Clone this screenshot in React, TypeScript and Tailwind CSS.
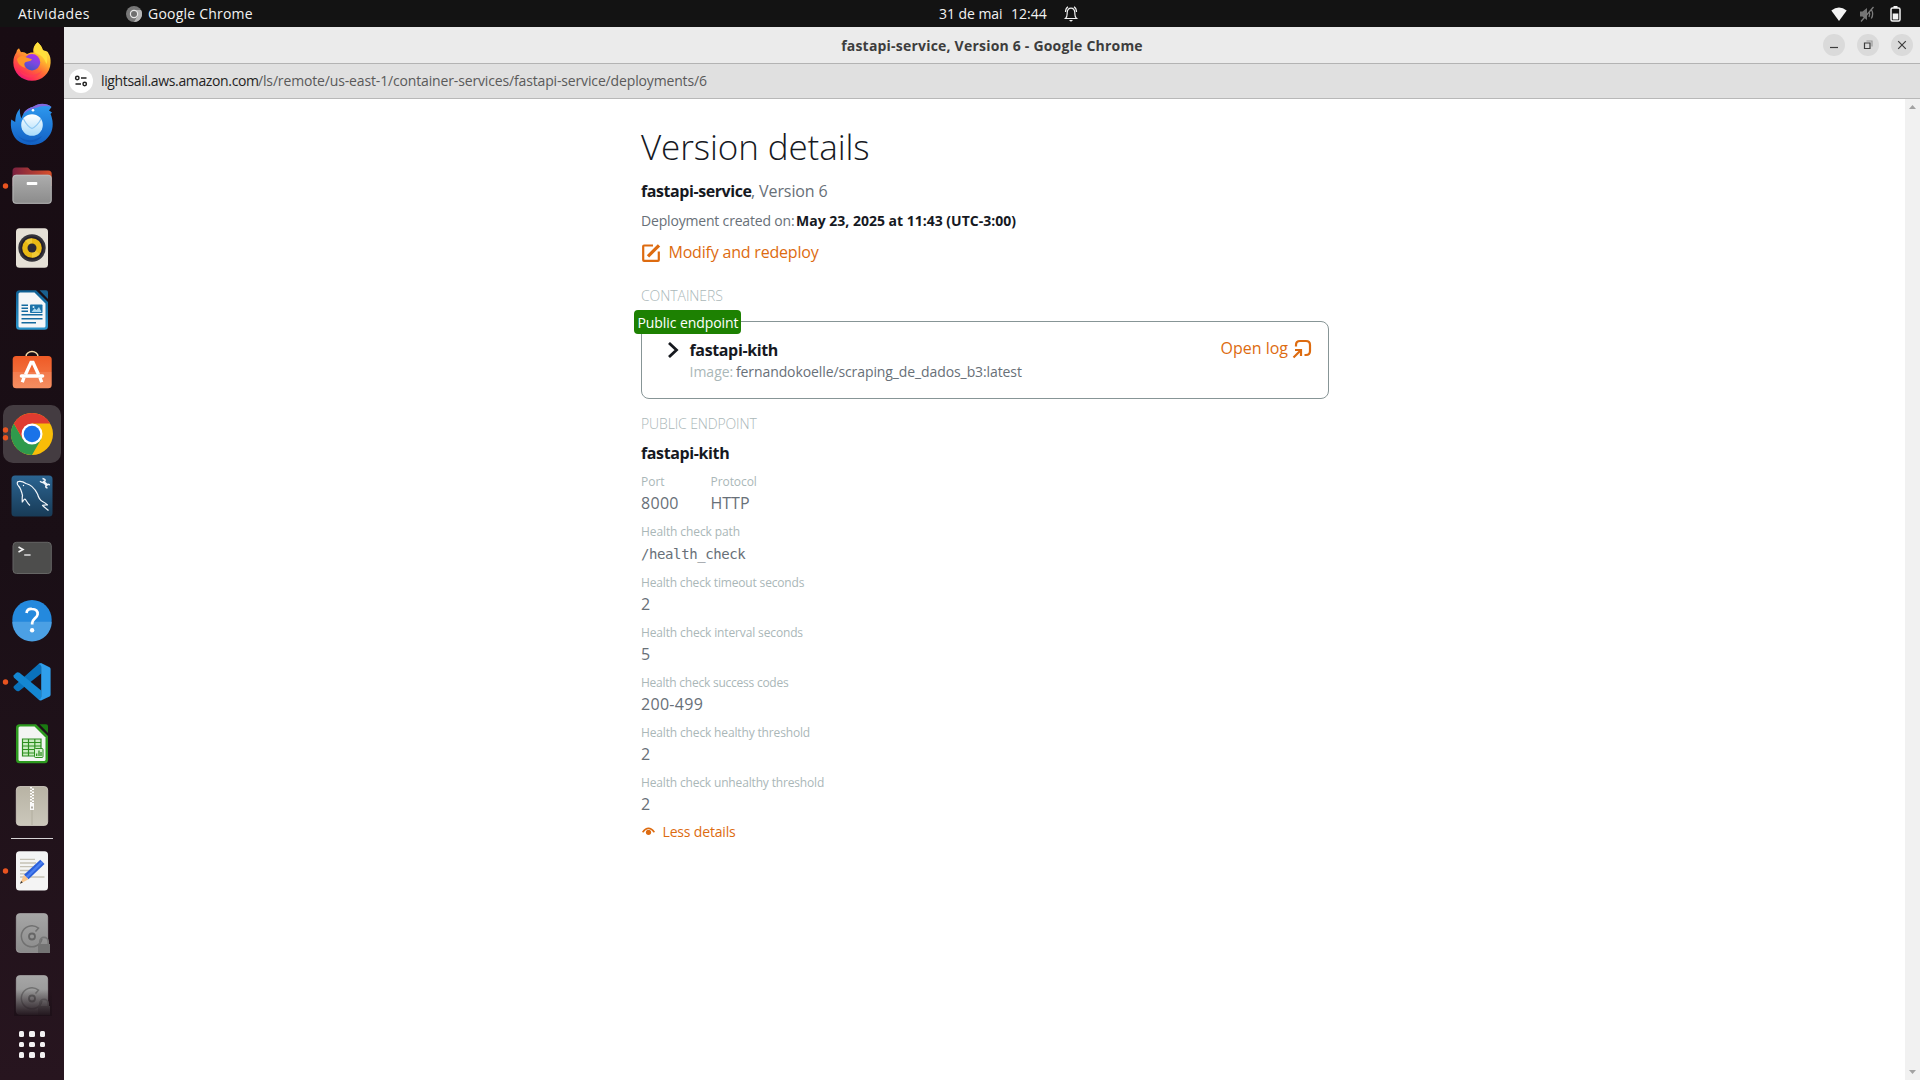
import type { ReactNode } from 'react';

function DockItem({ dots = 0, active = false, children }: { dots?: number; active?: boolean; children: ReactNode }) {
  return (
    <svg className="h-[62px] w-16 shrink-0" viewBox="0 0 64 62">
      {active && <rect x="3" y="2" width="58" height="58" rx="10" fill="#443c41" />}
      {dots === 1 && <circle cx="5.5" cy="31" r="2.7" fill="#e95420" />}
      {dots === 2 && (
        <>
          <circle cx="5.5" cy="27" r="2.7" fill="#e95420" />
          <circle cx="5.5" cy="34.8" r="2.7" fill="#e95420" />
        </>
      )}
      {children}
    </svg>
  );
}

function Gradient({ id, from, to, horizontal = false }: { id: string; from: string; to: string; horizontal?: boolean }) {
  return (
    <linearGradient id={id} x1="0" y1="0" x2={horizontal ? 1 : 0} y2={horizontal ? 0 : 1}>
      <stop offset="0" stopColor={from} />
      <stop offset="1" stopColor={to} />
    </linearGradient>
  );
}

function Firefox() {
  return (
    <DockItem>
      <defs>
        <linearGradient id="ffBody" x1="0.85" y1="0.05" x2="0.25" y2="1">
          <stop offset="0" stopColor="#fff44f" />
          <stop offset="0.35" stopColor="#ffb52e" />
          <stop offset="0.6" stopColor="#ff6a36" />
          <stop offset="0.85" stopColor="#ff2f55" />
          <stop offset="1" stopColor="#e31587" />
        </linearGradient>
        <linearGradient id="ffGlobe" x1="0.7" y1="0" x2="0.3" y2="1">
          <stop offset="0" stopColor="#b22fe8" />
          <stop offset="0.5" stopColor="#7a49e0" />
          <stop offset="1" stopColor="#4453c4" />
        </linearGradient>
      </defs>
      <path d="M37.7 11.3C40.5 14 42 16.2 42.8 19C46 20.5 47.5 19.5 48.5 22.5C50.3 25 50.8 28 50.6 32C50 42.5 42 49.8 32 49.8C21.5 49.8 13.3 41.6 13.3 31.5C13.3 27 14.6 23.8 16.3 21.5L17 19L19 17.2L21 21.2C23.5 20.8 25.3 21.6 27 23.1C29 21.5 31.5 21.2 33.5 21.5C32.5 17.5 34.5 13.8 37.7 11.3Z" fill="url(#ffBody)" />
      <circle cx="32" cy="31.3" r="8.2" fill="url(#ffGlobe)" />
      <path d="M17 28C20 24 23 24.5 26.5 26.5L32 28.3C31 31 27 30 25 31.5C23.5 33 24.5 35.5 25.5 37C20 35.5 17.5 32 17 28Z" fill="#ff9428" />
      <path d="M37.7 11.3C40.5 14 42 16.2 42.8 19C47 22 48.5 28 46.5 33C45 29 42 24 38.5 23.5L35 21.8C33 18 34.5 13.8 37.7 11.3Z" fill="#ffdf3c" />
      <path d="M19 38C24 45.5 36 46 42 39.5C37 49 23 49 19 38Z" fill="#ff3b5c" opacity=".6" />
    </DockItem>
  );
}

function Thunderbird() {
  return (
    <DockItem>
      <defs>
        <Gradient id="tbBody" from="#2f9bf0" to="#1260c4" />
        <Gradient id="tbMail" from="#ffffff" to="#a9dcfb" />
      </defs>
      <path d="M51.5 14C48 10.5 40 9.5 34 13.5C27 15 23 20 21.5 25.5C20 22 19.5 18.5 20 15.5C16 20 15.5 24 15.2 29L11.2 26.5C10 34 12 42 17 47C25 54 38 53.5 45.500 47C51 42 53.5 36 52.5 28C52 25 51.5 23 50.5 21L52 19.5L49 17.5Z" fill="url(#tbBody)" />
      <path d="M51.5 14C46 9.5 38.5 9.8 33 13.7C29 14.500 25 17 23 21C30 15.500 35 15.5 40 13.5C44 12.6 48 12.6 51.5 14Z" fill="#8468dd" />
      <circle cx="33" cy="17.300" r="1.300" fill="#fff" />
      <circle cx="32" cy="32" r="10.800" fill="url(#tbMail)" />
      <path d="M23.500 26C26 31 29.500 34.500 32 35.500C34.500 34.500 39 30.500 41 26" fill="none" stroke="#8fc8f2" strokeWidth="1.200" />
      <path d="M15 38C19 48 32 50 42 43C37 51 22 53 15 38Z" fill="#0d4fae" opacity=".5" />
    </DockItem>
  );
}

function Files() {
  return (
    <DockItem dots={1}>
      <defs>
        <Gradient id="fTab" from="#7a2140" to="#d9502a" horizontal />
        <Gradient id="fBody" from="#adadad" to="#8b8b8b" />
      </defs>
      <path d="M12.5 16a3.5 3.5 0 0 1 3.5-3.5h11.5c1.5 0 2 3 4.5 3h16.2a3.5 3.5 0 0 1 3.5 3.5v12h-39.2z" fill="url(#fTab)" />
      <rect x="12.5" y="19.8" width="39.2" height="29" rx="3.5" fill="url(#fBody)" />
      <rect x="13" y="20.3" width="38.2" height="28" rx="3" fill="none" stroke="#bcbcbc" strokeWidth=".8" />
      <rect x="26.7" y="27" width="10.6" height="3" rx=".8" fill="#fff" />
    </DockItem>
  );
}

function Rhythmbox() {
  return (
    <DockItem>
      <rect x="16" y="11.3" width="32" height="39.5" rx="3.5" fill="#e5e0d6" />
      <circle cx="32" cy="31" r="13.7" fill="#35343a" />
      <circle cx="32" cy="31" r="11.5" fill="#241f2b" />
      <circle cx="32" cy="31" r="9.8" fill="#e9b914" />
      <path d="M32 31L25 23.5A10 10 0 0 1 32 21.2ZM32 31L40 37A10 10 0 0 1 32 40.8Z" fill="#f7d64a" opacity=".6" />
      <circle cx="32" cy="31" r="4.5" fill="#2a2834" />
    </DockItem>
  );
}

function Writer() {
  return (
    <DockItem>
      <defs><Gradient id="wrB" from="#0f5f93" to="#2b94cb" /></defs>
      <path d="M19.5 11.3H36L48 23V47.3a3.5 3.5 0 0 1-3.5 3.5H19.5A3.5 3.5 0 0 1 16 47.3V14.8a3.5 3.5 0 0 1 3.5-3.5z" fill="url(#wrB)" />
      <path d="M20 13.5H34.5L45.5 24.5V47a1.5 1.5 0 0 1-1.5 1.5H20A1.5 1.5 0 0 1 18.5 47V15A1.5 1.5 0 0 1 20 13.5Z" fill="#f5f6f7" />
      <path d="M39.5 11.3H46a2 2 0 0 1 2 2V20Z" fill="#19608f" />
      <path d="M21.5 26.2h6.500M21.5 29.2h6.500M21.5 32.2h6.500M21.5 35.7h21M21.5 39.7h21M21.5 43.7h14.500" stroke="#156a9f" strokeWidth="1.4" />
      <rect x="30" y="25.5" width="12.5" height="8.5" rx=".8" fill="#1b73aa" />
      <path d="M31.5 33L34.5 29.3L36.5 31L39 28L41.5 33Z" fill="#a8d6ef" /><circle cx="33.5" cy="28" r="1" fill="#d6eefa" />
    </DockItem>
  );
}

function Software() {
  return (
    <DockItem>
      <defs><Gradient id="swB" from="#ef5a26" to="#f4814f" /></defs>
      <path d="M26 17.5V15.500a6 5 0 0 1 12 0V17.5" fill="none" stroke="#f5d9a7" strokeWidth="1.5" />
      <rect x="12.7" y="15" width="39" height="32.2" rx="3.5" fill="url(#swB)" />
      <path d="M12.7 31H51.7V43.7a3.5 3.5 0 0 1-3.5 3.5H16.2a3.5 3.5 0 0 1-3.5-3.5z" fill="#fff" opacity=".1" />
      <path d="M25.5 33.5L31 21.5H33L38.5 33.5M24 36.5L22.3 41.3M40 36.5L41.7 41.3" fill="none" stroke="#fff" strokeWidth="3.3" />
      <path d="M21.5 35H42.5" stroke="#fff" strokeWidth="3.6" strokeLinecap="round" />
    </DockItem>
  );
}

function Chrome() {
  return (
    <DockItem active dots={2}>
      <circle cx="32" cy="31" r="21" fill="#f8bd08" />
      <path d="M32 31L41.1 36.25L32 52A21 21 0 0 1 13.81 20.5L22.9 36.25Z" fill="#2f9a4c" />
      <path d="M32 20.5H50.19A21 21 0 0 0 13.81 20.5L22.9 36.25L32 31Z" fill="#df3b30" />
      <circle cx="32" cy="31" r="10.5" fill="#fff" />
      <circle cx="32" cy="31" r="8.3" fill="#1a73e8" />
    </DockItem>
  );
}

function MySql() {
  return (
    <DockItem>
      <defs><Gradient id="myB" from="#2b6491" to="#183b57" /></defs>
      <rect x="11.5" y="10.5" width="41" height="41" rx="3.5" fill="url(#myB)" />
      <path d="M22.3 37.5C22.2 35 22 32.5 22.5 30.5C21.5 26 20.5 23 18.5 21C16.5 18.5 17 16.5 19 16.4C22 15.8 24.5 17.5 26 18.5C31 19.5 35 24 37.5 29C38.5 32.5 40 35.5 42.5 36.5C44.5 37.5 46 38.5 47.5 40C46 39.7 44 40 42.5 40.3C44 42 46.5 43.5 48.5 45.5M22.5 37C23.5 35 24.5 33.5 25.5 34.5C27 37 28 39 30 40.5" fill="none" stroke="#f2f6fa" strokeWidth="1.2" strokeLinejoin="round" />
      <circle cx="23.5" cy="20.5" r=".7" fill="#fff" />
      <path d="M43 16.500L47.500 20.500" stroke="#f2f6fa" strokeWidth="2.500" />
      <path d="M40 16.200Q42.500 18.500 44.500 16.500T42.500 13.500M49.800 20Q47.500 18.500 46.200 20.500T47.500 23" fill="none" stroke="#f2f6fa" strokeWidth="1.500" />
    </DockItem>
  );
}

function Terminal() {
  return (
    <DockItem>
      <rect x="13" y="15.3" width="38.3" height="31.2" rx="3.5" fill="#4d4d4c" stroke="#656564" />
      <path d="M18.5 20L23 22.5L18.5 25" fill="none" stroke="#f4f4f4" strokeWidth="1.6" />
      <path d="M24.2 28H30.6" stroke="#e8e8e8" strokeWidth="1.4" />
    </DockItem>
  );
}

function Help() {
  return (
    <DockItem>
      <circle cx="32" cy="30.8" r="19.7" fill="#2489dd" />
      <path d="M12.3 32.8H51.7A19.7 19.7 0 0 1 12.3 32.8Z" fill="#4ba0e4" />
      <path d="M26.5 24C27 20.5 30 19.8 32 20C36 20 38 22 37.6 25.3C37.2 28.8 32.5 30 32.2 33.8V35.5" fill="none" stroke="#fff" strokeWidth="2.7" />
      <circle cx="32.1" cy="41.3" r="2.2" fill="#fff" />
    </DockItem>
  );
}

function VsCode() {
  return (
    <DockItem dots={1}>
      <path d="M41.5 12.3L41.2 22.5L19.5 39.8Q17.5 41 16 39.5L13.8 37.3Q13 36 14 35L38.5 13Z" fill="#0a72bb" />
      <path d="M41.5 49.3L41.2 39.5L19.5 21.7Q17.5 20.5 16 22L13.8 24.3Q13 25.7 14 26.7L38.5 48.5Z" fill="#1487d2" />
      <path d="M41.5 12.3L49.5 16.2Q50.6 16.8 50.6 18V43.7Q50.6 45 49.5 45.5L41.5 49.3Q39.5 49.7 38.5 48.5Q41 48.6 41.2 46V15.5Q41 13.3 38.5 13Q39.7 11.8 41.5 12.3Z" fill="#2f9eea" />
    </DockItem>
  );
}

function Calc() {
  return (
    <DockItem>
      <path d="M19.5 11.3H36L48 23V46.8a3.5 3.5 0 0 1-3.5 3.5H19.5A3.5 3.5 0 0 1 16 46.8V14.8a3.5 3.5 0 0 1 3.5-3.5z" fill="#2d9a1f" />
      <path d="M20 13.5H34.5L45.5 24.5V46.5a1.5 1.5 0 0 1-1.5 1.5H20A1.5 1.5 0 0 1 18.5 46.5V15A1.5 1.5 0 0 1 20 13.5Z" fill="#f3f5f3" />
      <path d="M39.5 11.3H46a2 2 0 0 1 2 2V20Z" fill="#1b7a12" />
      <rect x="22.5" y="26" width="18.5" height="17" fill="#c9ecc0" />
      <path d="M22.5 26H41V43H22.5ZM22.5 29.5H41M22.5 33H41M22.5 36.5H41M22.5 40H41M28.5 26V43M34.8 26V43" fill="none" stroke="#2d8f20" strokeWidth="1.2" />
      <rect x="34.5" y="35.5" width="8.5" height="9" rx="1" fill="#d6f0cf" stroke="#2d8f20" strokeWidth="1" />
      <path d="M36.7 43V40.5M39 43V37.5M41 43V39" stroke="#2d8f20" strokeWidth="1.3" />
    </DockItem>
  );
}

function Archive() {
  return (
    <DockItem>
      <defs><Gradient id="arB" from="#b8b3a4" to="#cbc7bb" /></defs>
      <rect x="16.3" y="11.5" width="31.4" height="39" rx="3.5" fill="url(#arB)" stroke="#d5d1c7" strokeWidth=".8" />
      <path d="M32 35V50" stroke="#b2ae9f" strokeWidth="1" />
      <path d="M31 12V29" stroke="#fff" strokeWidth="2" strokeDasharray="1.5 1.5" />
      <path d="M33 13.5V29" stroke="#fff" strokeWidth="2" strokeDasharray="1.5 1.5" />
      <path d="M30 28H34V35H30Z" fill="#fafafa" /><rect x="31.2" y="31.5" width="1.6" height="2" fill="#a09c90" />
    </DockItem>
  );
}

function Editor() {
  return (
    <DockItem dots={1}>
      <rect x="16" y="11.3" width="32" height="39.2" rx="3.5" fill="#f4f4f4" />
      <path d="M20 19.4H35M20 23H36M20 26.7H33M20 30.5H30M20 33.8H27M20 37H44.5" stroke="#c5c1b4" strokeWidth="1.3" />
      <path d="M40.3 19.7L44.5 24L28.5 39.2L24 34.8Z" fill="#2a5fd9" />
      <path d="M41.5 21L43.2 22.7L27 38.5L25.3 36.8Z" fill="#4a7ff0" />
      <path d="M24 34.8L28.5 39.2L20 43.8Z" fill="#f8c58c" />
      <path d="M21.2 41L22.8 42.5L20 43.8Z" fill="#333" />
    </DockItem>
  );
}

function Disk({ faded = false }: { faded?: boolean }) {
  return (
    <DockItem>
      <defs>
        <Gradient id="dkB" from="#a6a6a6" to="#8b8b8b" />
        <linearGradient id="dkFade" x1="0" y1="0" x2="0" y2="1">
          <stop offset="0.35" stopColor="#1b0f16" stopOpacity="0" />
          <stop offset="1" stopColor="#1d1018" stopOpacity="0.96" />
        </linearGradient>
      </defs>
      <rect x="16.3" y="11.5" width="31.4" height="39" rx="3.5" fill="url(#dkB)" stroke="#b3b3b3" strokeWidth=".6" />
      <path d="M42 37A10.500 10.500 0 1 1 38.500 26.200L35.500 29.500" fill="none" stroke="#717171" strokeWidth="1.5" />
      <circle cx="32" cy="34.5" r="3" fill="none" stroke="#666" strokeWidth="1.8" />
      <path d="M39.8 42.5V39.5A4.2 4.2 0 0 1 48.2 39.5V42.5" fill="none" stroke="#777" strokeWidth="1.7" />
      <rect x="38" y="42" width="12" height="9" fill="#747474" />
      {faded && <rect x="14" y="11" width="38" height="41" fill="url(#dkFade)" />}
    </DockItem>
  );
}

function Dock() {
  return (
    <aside className="flex w-16 shrink-0 flex-col items-center bg-gradient-to-b from-[#180c13] via-[#1a0f16] to-[#27151f] pt-1">
      <Firefox />
      <Thunderbird />
      <Files />
      <Rhythmbox />
      <Writer />
      <Software />
      <Chrome />
      <MySql />
      <Terminal />
      <Help />
      <VsCode />
      <Calc />
      <Archive />
      <div className="my-px h-px w-[42px] shrink-0 bg-[#d6d3d5]" />
      <Editor />
      <Disk />
      <Disk faded />
      <div className="mt-[5px] grid grid-cols-3 gap-[5px]">
        {Array.from({ length: 9 }, (_, i) => (
          <span key={i} className="size-[5.5px] rounded-[1.5px] bg-[#f3f1f2]" />
        ))}
      </div>
    </aside>
  );
}

function TopBar() {
  return (
    <header className="grid h-[27px] shrink-0 grid-cols-[1fr_auto_1fr] items-center bg-[#131313] text-sm leading-[26px] text-[#f2f2f2]">
      <div className="flex items-center">
        <span className="ml-[18px] w-[108px] tracking-[0.45px]">Atividades</span>
        <svg className="mr-1.5 size-4" viewBox="0 0 16 16">
          <circle cx="8" cy="8" r="8" fill="#777" />
          <path d="M8 8L11.5 10L8 16A8 8 0 0 0 15 4H8Z" fill="#b5b5b5" />
          <circle cx="8" cy="8" r="4.2" fill="#e8e8e8" />
          <circle cx="8" cy="8" r="3" fill="#6f6f6f" />
        </svg>
        <span className="tracking-[0.22px]">Google Chrome</span>
      </div>
      <div className="flex items-center pl-[98px]">
        <span className="w-[72px] tracking-[-0.05px]">31 de mai</span>
        <span className="w-[52px]">12:44</span>
        <svg className="size-4" viewBox="0 0 16 16" fill="none" stroke="#f0f0f0" strokeWidth="1.2">
          <path d="M2.5 12.5C4.5 11 4 9 4.2 6.5C4.5 3.5 6 2.2 8 2.2S11.5 3.5 11.8 6.5C12 9 11.5 11 13.5 12.5ZM2.5 6C2.5 3.5 3.5 1.8 5 .8M13.5 6C13.5 3.5 12.5 1.8 11 .8" />
          <path d="M6 14H10L8.5 15.5H7.5Z" fill="#f0f0f0" stroke="none" />
        </svg>
      </div>
      <div className="flex items-center justify-end pr-[19px]">
        <svg className="h-4 w-4" viewBox="0 0 16 16"><path d="M8 15L.3 4.500Q8-1.500 15.700 4.500Z" fill="#f4f4f4" /></svg>
        <svg className="ml-3 h-4 w-4" viewBox="0 0 16 16">
          <path d="M1 5.5H3.5L8 2V14L3.5 10.5H1Z" fill="#757575" />
          <path d="M10 5.5Q11.5 8 10 11M12.3 3.5Q15 8 12.3 12.5M14.5 1L2 15.5" fill="none" stroke="#7c7c7c" strokeWidth="1.3" />
        </svg>
        <svg className="ml-[15px] h-4 w-[11px]" viewBox="0 0 11 16">
          <path d="M3.5 0H7.5V2H3.5Z" fill="#f4f4f4" />
          <rect x="1" y="2" width="9" height="13" rx="1.5" fill="none" stroke="#f4f4f4" strokeWidth="1.5" />
          <rect x="2.7" y="7.5" width="5.6" height="6" fill="#f4f4f4" />
        </svg>
      </div>
    </header>
  );
}

function WindowButton({ children }: { children: ReactNode }) {
  return (
    <span className="flex size-[22px] items-center justify-center rounded-full bg-[#dadada]">
      <svg className="size-3" viewBox="0 0 12 12" fill="none" stroke="#3d3d3d" strokeWidth="1.2">{children}</svg>
    </span>
  );
}

function TitleBar() {
  return (
    <div className="grid h-9 shrink-0 grid-cols-[1fr_auto_1fr] items-center bg-[#ebebeb]">
      <span />
      <h2 className="pt-0.5 text-sm font-bold tracking-[0.21px] text-[#3d3d3d]">fastapi-service, Version 6 - Google Chrome</h2>
      <div className="flex justify-end gap-3 pr-[7px]">
        <WindowButton><path d="M2 8.500H10" /></WindowButton>
        <WindowButton><path d="M2.500 4H8V9.500H2.500Z" /><path d="M4.500 2H10V7.500" stroke="#999" /></WindowButton>
        <WindowButton><path d="M2.200 2.200L9.800 9.800M9.800 2.200L2.200 9.800" /></WindowButton>
      </div>
    </div>
  );
}

function AddressBar() {
  return (
    <div className="flex h-9 shrink-0 items-center border-y border-t-[#b3b3b3] border-b-[#b8b8b8] bg-[#e0e0e0] pl-[5px] text-sm">
      <span className="flex size-6 items-center justify-center rounded-full bg-white">
        <svg className="size-3.5" viewBox="0 0 14 14" fill="none" stroke="#222" strokeWidth="1.5">
          <circle cx="3.3" cy="4" r="1.7" /><path d="M7 4H12.5M1.5 10H7" /><circle cx="10.7" cy="10" r="1.7" />
        </svg>
      </span>
      <span className="ml-2 w-[157px] tracking-[-0.36px] whitespace-nowrap text-[#1f1f1f]">lightsail.aws.amazon.com</span>
      <span className="tracking-[-0.15px] whitespace-nowrap text-[#5a5a5a]">/ls/remote/us-east-1/container-services/fastapi-service/deployments/6</span>
    </div>
  );
}

function Field({ label, labelClass = '', children }: { label: string; labelClass?: string; children: ReactNode }) {
  return (
    <div className="mt-[9px]">
      <dt className={`text-xs leading-4 text-[#aab7b8] ${labelClass}`}>{label}</dt>
      <dd className="mt-px text-base leading-6 text-[#687078]">{children}</dd>
    </div>
  );
}

function ContainerCard() {
  return (
    <section className="relative mt-[15px] flex h-[78px] w-[688px] rounded-lg border border-[#879596] pt-4">
      <span className="absolute -top-3 -left-2 flex h-6 w-[107px] items-center justify-center rounded bg-[#1d8102] pt-px pl-px text-sm tracking-[-0.07px] whitespace-nowrap text-white">Public endpoint</span>
      <svg className="mt-1 ml-[25px] h-4 w-3 shrink-0" viewBox="0 0 12 16" fill="none" stroke="#16191f" strokeWidth="2.800"><path d="M2 1L9.500 8L2 15" /></svg>
      <div className="ml-[10.5px] grow">
        <h3 className="text-base leading-6 font-bold tracking-[-0.36px] text-[#16191f]">fastapi-kith</h3>
        <p className="flex text-sm leading-5 text-[#687078]">
          <span className="w-[46.5px] text-[#aab7b8]">Image:</span>
          <span className="tracking-[-0.1px]">fernandokoelle/scraping_de_dados_b3:latest</span>
        </p>
      </div>
      <a className="mt-[-2px] mr-4 flex h-6 items-center gap-1 text-base leading-6 text-[#dd6b10]">
        Open log
        <svg className="mt-px size-5" viewBox="0 0 20 20" fill="none" stroke="currentColor" strokeWidth="2.200">
          <path d="M4 7.500V6Q4 2 8 2H14Q18 2 18 6V12Q18 16 14 16H12.500" />
          <path d="M1.500 18.500L9 11M3 11H9V17" />
        </svg>
      </a>
    </section>
  );
}

function Details() {
  return (
    <main className="mx-auto w-[689px] pt-6 pl-px text-[#687078]">
      <h1 className="text-[35px] leading-[48px] font-light tracking-[-0.1px] text-[#16191f]">Version details</h1>
      <p className="mt-2 flex text-base leading-6 whitespace-nowrap">
        <b className="w-[110px] tracking-[-0.43px] text-[#16191f]">fastapi-service</b>
        <span className="tracking-[-0.1px]">, Version 6</span>
      </p>
      <p className="mt-2 flex text-sm leading-5 whitespace-nowrap">
        <span className="w-[155px] tracking-[-0.18px]">Deployment created on:</span>
        <b className="text-[#16191f]">May 23, 2025 at 11:43 (UTC-3:00)</b>
      </p>
      <a className="mt-[9px] flex h-6 items-center text-base leading-6 tracking-[-0.2px] text-[#dd6b10]">
        <svg className="mt-0.5 mr-[7.5px] size-5" viewBox="0 0 20 20" fill="none" stroke="currentColor" strokeWidth="2.200">
          <path d="M12 2.500H3Q2.200 2.500 2.200 3.300V17Q2.200 17.800 3 17.800H17Q17.800 17.800 17.800 17V8.500" />
          <path d="M7 13.300L18 2.300" strokeWidth="3.300" />
        </svg>
        Modify and redeploy
      </a>
      <h4 className="mt-[22px] text-sm leading-5 font-light tracking-[-0.07px] text-[#aab7b8]">CONTAINERS</h4>
      <ContainerCard />
      <h4 className="mt-[15px] text-sm leading-5 font-light tracking-[-0.13px] text-[#aab7b8]">PUBLIC ENDPOINT</h4>
      <h3 className="mt-[7px] text-base leading-6 font-bold tracking-[-0.38px] text-[#16191f]">fastapi-kith</h3>
      <dl>
        <div className="grid grid-cols-[69.5px_1fr]">
          <Field label="Port"><span className="tracking-[0.3px]">8000</span></Field>
          <Field label="Protocol" labelClass="tracking-[-0.07px]">HTTP</Field>
        </div>
        <Field label="Health check path" labelClass="tracking-[-0.1px]">
          <span className="block h-[25px] pt-px font-['DejaVu_Sans_Mono',monospace] text-sm leading-6 tracking-[-0.4px]">/health_check</span>
        </Field>
        <Field label="Health check timeout seconds" labelClass="tracking-[-0.17px]">2</Field>
        <Field label="Health check interval seconds" labelClass="tracking-[-0.14px]">5</Field>
        <Field label="Health check success codes" labelClass="tracking-[-0.24px]"><span className="tracking-[0.3px]">200-499</span></Field>
        <Field label="Health check healthy threshold" labelClass="tracking-[-0.15px]">2</Field>
        <Field label="Health check unhealthy threshold" labelClass="tracking-[-0.16px]">2</Field>
      </dl>
      <a className="mt-1.5 flex items-center text-sm leading-5 tracking-[-0.17px] text-[#dd6b10]">
        <svg className="mr-2 ml-[0.5px] h-3 w-[13px]" viewBox="0 0 13 12" fill="none" stroke="currentColor" strokeWidth="1.500">
          <path d="M.6 6.200Q6.500-1.500 12.400 6.200" />
          <circle cx="6.500" cy="6.300" r="2.600" fill="currentColor" stroke="none" />
        </svg>
        Less details
      </a>
    </main>
  );
}

export default function App() {
  return (
    <div className="flex h-[1080px] w-[1920px] flex-col overflow-hidden bg-white font-['Open_Sans',sans-serif]">
      <TopBar />
      <div className="flex min-h-0 grow">
        <Dock />
        <div className="flex min-w-0 grow flex-col">
          <TitleBar />
          <AddressBar />
          <div className="flex min-h-0 grow">
            <div className="grow"><Details /></div>
            <div className="flex w-[15px] flex-col items-center justify-between bg-[#f1f1f1] py-1.5">
              <svg className="h-1 w-[7px]" viewBox="0 0 7 4"><path d="M0 4L3.500 0L7 4Z" fill="#a3a3a3" /></svg>
              <svg className="h-1 w-[7px]" viewBox="0 0 7 4"><path d="M0 0L3.500 4L7 0Z" fill="#a3a3a3" /></svg>
            </div>
          </div>
        </div>
      </div>
    </div>
  );
}
